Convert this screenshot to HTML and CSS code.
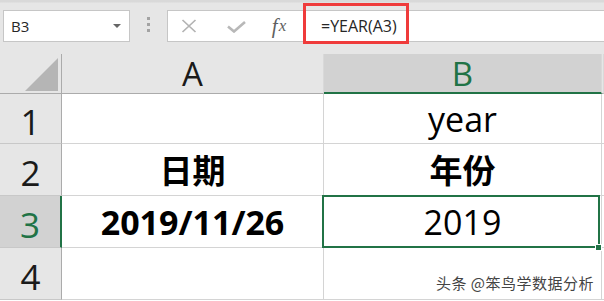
FILE: index.html
```html
<!DOCTYPE html>
<html lang="zh-CN">
<head>
<meta charset="utf-8">
<title>YEAR</title>
<link rel="stylesheet" href="styles.css">
</head>
<body>
<div class="toolbar">
  <div class="namebox"><span class="nb-text">B3</span><span class="nb-arrow"></span></div>
  <div class="grip"><i></i><i></i><i></i></div>
  <div class="fbar">
    <span class="ficon ic-cancel"><svg width="16" height="14" viewBox="0 0 16 14"><path d="M1.5 1 L14.5 13 M14.5 1 L1.5 13" stroke="#b3b3b3" stroke-width="1.7" fill="none"/></svg></span>
    <span class="ficon ic-enter"><svg width="19" height="12" viewBox="0 0 19 12"><path d="M1 5.5 L7 10.5 L18 1" stroke="#b8b8b8" stroke-width="2.6" fill="none"/></svg></span>
    <span class="ficon ic-fx"><span class="fx-f">f</span><span class="fx-x">x</span></span>
    <span class="formula">=YEAR(A3)</span>
  </div>
  <span class="highlight"></span>
</div>
<div class="sheet">
  <div class="corner"><svg width="33" height="33" viewBox="0 0 33 33"><polygon points="33,0 33,33 0,33" fill="#b5b5b5"/></svg></div>
  <div class="colhead">A</div>
  <div class="colhead colhead-active">B</div>
  <div class="colhead colhead-rest"></div>

  <div class="rowhead">1</div>
  <div class="cell"></div>
  <div class="cell">year</div>
  <div class="cell cell-rest"></div>

  <div class="rowhead">2</div>
  <div class="cell cell-cjk">日期</div>
  <div class="cell cell-cjk">年份</div>
  <div class="cell cell-rest"></div>

  <div class="rowhead rowhead-active">3</div>
  <div class="cell cell-bold">2019/11/26</div>
  <div class="cell cell-selected">2019</div>
  <div class="cell cell-rest"></div>

  <div class="rowhead">4</div>
  <div class="cell"></div>
  <div class="cell"></div>
  <div class="cell cell-rest"></div>
</div>
<div class="watermark">头条 @笨鸟学数据分析</div>
</body>
</html>
```
FILE: styles.css
```css
html, body {
  margin: 0;
  padding: 0;
}
body {
  width: 604px;
  height: 301px;
  overflow: hidden;
  position: relative;
  background: #ffffff;
  font-family: "Open Sans", "Noto Sans CJK SC", sans-serif;
  color: #000;
}
.toolbar {
  position: relative;
  height: 54px;
  box-sizing: border-box;
  padding-top: 10px;
  display: flex;
  align-items: flex-start;
  background: linear-gradient(#d9d9d9 0, #d9d9d9 2px, #e6e6e6 3px);
}
.namebox {
  margin-left: 3px;
  width: 127px;
  height: 32px;
  box-sizing: border-box;
  border: 1px solid #c6c6c6;
  background: #fff;
  display: flex;
  align-items: center;
  padding-left: 7px;
}
.nb-text {
  font-size: 15px;
  line-height: 15px;
  color: #262626;
}
.nb-arrow {
  margin-left: auto;
  margin-right: 8px;
  width: 0;
  height: 0;
  border-left: 4px solid transparent;
  border-right: 4px solid transparent;
  border-top: 4px solid #666;
}
.grip {
  width: 37px;
  display: flex;
  flex-direction: column;
  align-items: center;
  gap: 3px;
  padding-top: 7px;
}
.grip i {
  display: block;
  width: 3px;
  height: 3px;
  background: #a3a3a3;
}
.fbar {
  flex: 1;
  height: 32px;
  box-sizing: border-box;
  border: 1px solid #c6c6c6;
  border-right: none;
  background: #fff;
  display: flex;
  align-items: center;
}
.ficon {
  display: flex;
  align-items: center;
  justify-content: center;
}
.ic-cancel { width: 42px; }
.ic-enter { width: 52px; padding-top: 2px; }
.ic-fx {
  width: 34px;
  font-family: "Liberation Serif", serif;
  font-style: italic;
  color: #5f5f5f;
  line-height: 20px;
}
.fx-f { font-size: 21px; }
.fx-x { font-size: 17px; margin-left: 1px; }
.formula {
  padding-left: 25px;
  font-size: 16px;
  line-height: 16px;
  color: #262626;
}
.highlight {
  position: absolute;
  left: 303px;
  top: 3px;
  width: 106px;
  height: 41px;
  box-sizing: border-box;
  border: 3px solid #ef3b3b;
}
.sheet {
  display: grid;
  grid-template-columns: 62px 262px 278px 1fr;
  grid-template-rows: 40px 50px 52px 52px 52px;
}
.sheet > div {
  box-sizing: border-box;
}
.corner {
  background: #e6e6e6;
  border-right: 1px solid #ababab;
  border-bottom: 1px solid #ababab;
  display: flex;
  justify-content: flex-end;
  align-items: flex-end;
  padding: 0 3px 2px 0;
}
.corner svg { display: block; }
.colhead {
  background: #e6e6e6;
  border-bottom: 1px solid #ababab;
  border-right: 1px solid #d9d9d9;
  display: flex;
  align-items: center;
  justify-content: center;
  font-size: 33px;
  line-height: 33px;
  color: #1a1a1a;
}
.colhead-active {
  background: #d2d2d2;
  border-bottom: 2px solid #217346;
  color: #217346;
  padding-top: 1px;
}
.rowhead {
  background: #e6e6e6;
  border-right: 1px solid #ababab;
  border-bottom: 1px solid #c8c8c8;
  display: flex;
  align-items: center;
  justify-content: center;
  font-size: 35px;
  line-height: 35px;
  padding-top: 5px;
  color: #1a1a1a;
}
.rowhead-active {
  background: #d2d2d2;
  color: #217346;
  border-right: 2px solid #217346;
}
.cell {
  background: #fff;
  border-right: 1px solid #d4d4d4;
  border-bottom: 1px solid #d4d4d4;
  display: flex;
  align-items: center;
  justify-content: center;
  font-size: 34px;
  line-height: 34px;
  color: #000;
}
.cell-cjk {
  font-family: "Noto Sans CJK SC", sans-serif;
  font-weight: 700;
  font-size: 33px;
  line-height: 33px;
}
.cell-bold {
  font-weight: 700;
}
.cell-rest {
  border-right: none;
}
.cell-selected {
  position: relative;
}
.cell-selected::after {
  content: "";
  position: absolute;
  top: -1px;
  left: -2px;
  right: 1px;
  bottom: -1px;
  border: 2px solid #217346;
}
.cell-selected::before {
  content: "";
  position: absolute;
  right: 0;
  bottom: -3px;
  width: 5px;
  height: 5px;
  background: #217346;
  box-shadow: 0 0 0 1px #fff;
  z-index: 2;
}
.watermark {
  position: absolute;
  right: 10px;
  top: 275px;
  font-family: "Noto Sans CJK SC", sans-serif;
  font-size: 15px;
  line-height: 15px;
  letter-spacing: 0.5px;
  color: #444;
  text-shadow: 0 0 2px #fff, 1px 1px 0 #fff;
}
```
